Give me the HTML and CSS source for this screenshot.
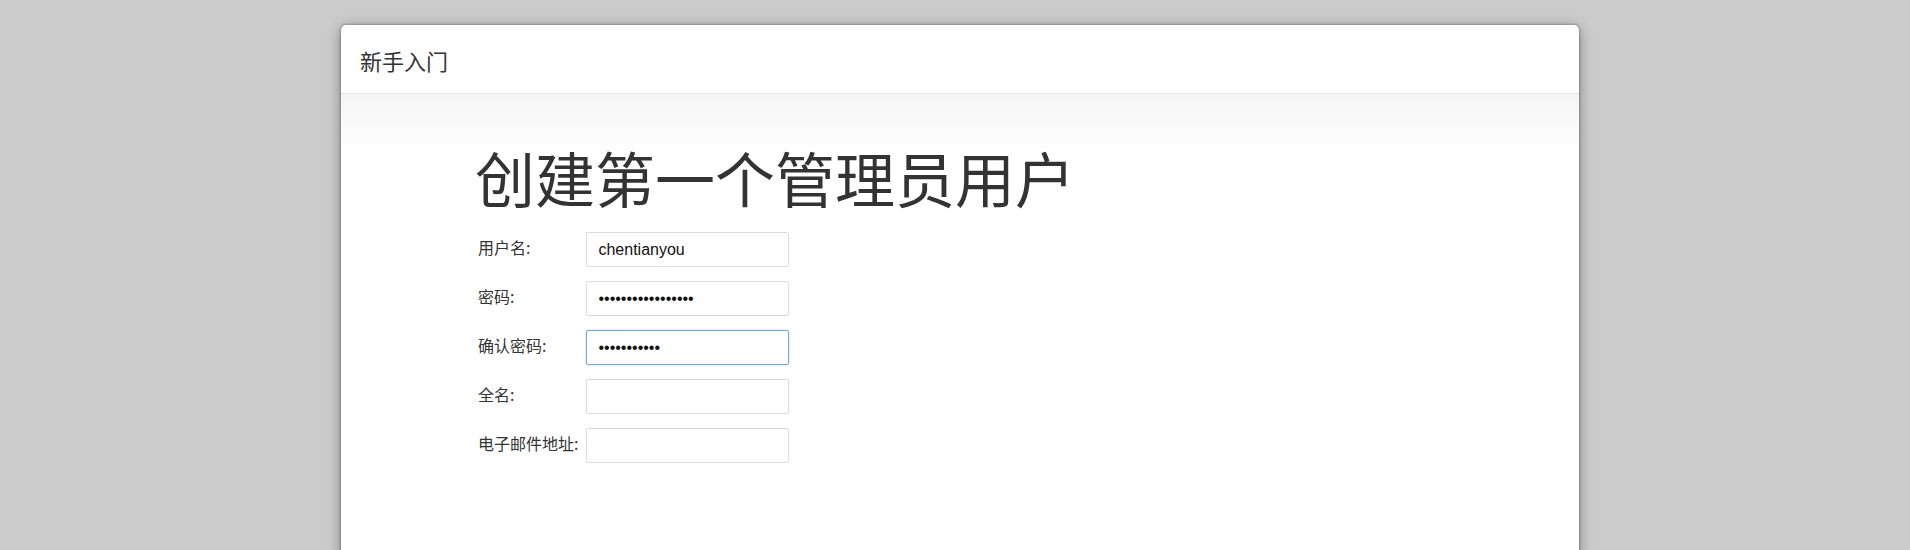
FILE: index.html
```html
<!DOCTYPE html>
<html lang="zh-CN">
<head>
<meta charset="utf-8">
<title>新手入门</title>
<link rel="stylesheet" href="styles.css">
</head>
<body>
<div class="dialog">
  <div class="dialog-header">
    <h4 class="dialog-title">新手入门</h4>
  </div>
  <div class="dialog-body">
    <h1 class="page-title">创建第一个管理员用户</h1>
    <form class="form">
      <label class="form-label" for="u">用户名:</label>
      <input class="form-input" id="u" type="text" value="chentianyou">
      <label class="form-label" for="p">密码:</label>
      <input class="form-input" id="p" type="password" value="12345678901234567">
      <label class="form-label" for="c">确认密码:</label>
      <input class="form-input is-focused" id="c" type="password" value="12345678901">
      <label class="form-label" for="f">全名:</label>
      <input class="form-input" id="f" type="text" value="">
      <label class="form-label" for="e">电子邮件地址:</label>
      <input class="form-input" id="e" type="text" value="">
    </form>
  </div>
</div>
</body>
</html>
```

FILE: styles.css
```css
html, body {
  margin: 0;
  padding: 0;
  height: 100%;
  overflow: hidden;
}
body {
  background: #cbcbcb;
  font-family: "Noto Sans CJK SC", "Liberation Sans", sans-serif;
  color: #333;
}
.dialog {
  margin: 25px 0 0 341px;
  width: 1238px;
  height: 600px;
  background: #fff;
  border-radius: 5px 5px 0 0;
  box-shadow: 0 0 3px rgba(0,0,0,0.45), 0 3px 14px rgba(0,0,0,0.35);
}
.dialog-header {
  height: 68px;
  border-bottom: 1px solid #e6e6e6;
  display: flex;
  align-items: center;
  padding: 0 19px;
}
.dialog-title {
  margin: 0;
  font-size: 22px;
  font-weight: 400;
  color: #333;
  line-height: 1;
  padding-top: 1px;
}
.dialog-body {
  padding: 0 0 0 134px;
  background: linear-gradient(to bottom, #f5f5f5 0px, #ffffff 60px);
  height: 500px;
}
.page-title {
  margin: 0;
  padding-top: 47px;
  font-size: 60px;
  font-weight: 400;
  line-height: 72px;
  color: #333;
}
.form {
  display: grid;
  grid-template-columns: auto 203px;
  column-gap: 8px;
  row-gap: 14px;
  margin-top: 19px;
  align-items: start;
  justify-content: start;
}
.form-label {
  font-size: 16px;
  line-height: 20px;
  padding: 5px 0 0 3px;
  color: #333;
}
.form-input {
  box-sizing: border-box;
  width: 203px;
  height: 35px;
  margin: 0;
  padding: 0 11px;
  border: 1px solid #dcdcdc;
  border-radius: 2px;
  background: #fff;
  font-family: "Liberation Sans", Arial, sans-serif;
  font-size: 16px;
  color: #111;
  outline: none;
}
.form-input.is-focused {
  border-color: #7ba6da;
  box-shadow: 0 0 2px rgba(102,150,220,0.5);
}
```
